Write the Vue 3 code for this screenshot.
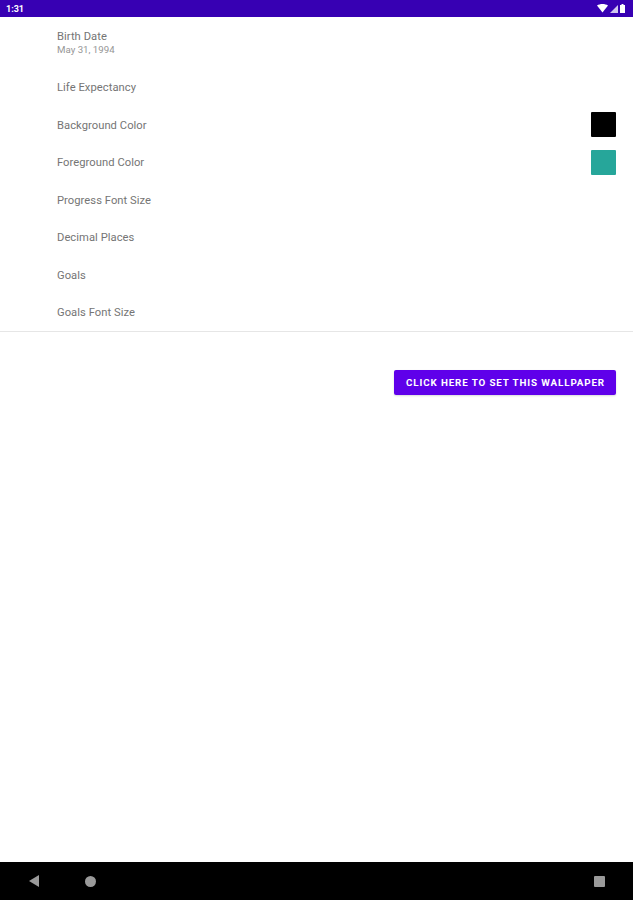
<template>
  <div class="screen">
    <div class="status-bar">
      <span class="clock">1:31</span>
      <div class="status-icons">
        <svg width="11" height="9" viewBox="0 0 11 9"><path d="M0 1.5 C3 -0.5 8 -0.5 11 1.5 L5.5 8.5 Z" fill="#fff" /></svg>
        <svg width="8" height="8" viewBox="0 0 8 8"><path d="M8 0 V8 H0 Z" fill="#cfc6ee" /></svg>
        <svg width="5" height="9" viewBox="0 0 5 9"><path d="M1.5 0 H3.5 V1 H5 V9 H0 V1 H1.5 Z" fill="#fff" /></svg>
      </div>
    </div>

    <div class="prefs">
      <div class="pref first">
        <div class="pref-text">
          <div class="pref-title">Birth Date</div>
          <div class="pref-summary">May 31, 1994</div>
        </div>
      </div>
      <div v-for="item in items" :key="item.title" class="pref">
        <div class="pref-title row-title">{{ item.title }}</div>
        <div v-if="item.color" class="swatch" :style="{ background: item.color }"></div>
      </div>
    </div>

    <div class="actions">
      <button class="set-btn">CLICK HERE TO SET THIS WALLPAPER</button>
    </div>

    <div class="nav-bar">
      <svg class="nav-back" width="12" height="14" viewBox="0 0 12 14"><path d="M11 1 V13 L1 7 Z" fill="#9a9a9a" /></svg>
      <div class="nav-home"></div>
      <div class="nav-recent"></div>
    </div>
  </div>
</template>

<script setup>
const items = [
  { title: "Life Expectancy" },
  { title: "Background Color", color: "#000000" },
  { title: "Foreground Color", color: "#26a69a" },
  { title: "Progress Font Size" },
  { title: "Decimal Places" },
  { title: "Goals" },
  { title: "Goals Font Size" },
];
</script>

<style>
body {
  margin: 0;
  background: #fff;
}
</style>

<style scoped>
.screen {
  width: 633px;
  height: 900px;
  display: flex;
  flex-direction: column;
  background: #fff;
  font-family: Roboto, "Liberation Sans", sans-serif;
  overflow: hidden;
}

.status-bar {
  height: 17px;
  flex: none;
  background: #3700b3;
  color: #fff;
  display: flex;
  align-items: center;
  justify-content: space-between;
  padding: 0 8px 0 6px;
  box-sizing: border-box;
}

.clock {
  font-size: 9px;
  font-weight: 700;
}

.status-icons {
  display: flex;
  align-items: center;
  gap: 2px;
}

.prefs {
  border-bottom: 1px solid #e6e6e6;
  flex: none;
}

.pref {
  height: 37.5px;
  display: flex;
  align-items: center;
  justify-content: space-between;
  padding: 0 17px 0 57px;
}

.pref.first {
  height: 51.5px;
}

.pref-title {
  font-size: 11.2px;
  letter-spacing: 0.05px;
  color: #757575;
}

.row-title {
  padding-top: 1px;
}

.pref-summary {
  font-size: 9.7px;
  color: #969696;
  margin-top: 1px;
}

.swatch {
  width: 25px;
  height: 25px;
  border-radius: 1px;
}

.actions {
  flex: 1;
  display: flex;
  justify-content: flex-end;
  align-items: flex-start;
  padding: 38px 17px 0 0;
}

.set-btn {
  width: 222px;
  height: 25px;
  border: none;
  border-radius: 2px;
  background: #5f00ea;
  color: #fff;
  font-family: inherit;
  font-size: 9.8px;
  font-weight: 700;
  letter-spacing: 0.88px;
  padding: 0 0 0 1px;
  white-space: nowrap;
  box-shadow: 0 1px 2px rgba(0, 0, 0, 0.15);
}

.nav-bar {
  height: 38px;
  flex: none;
  background: #000;
  position: relative;
  display: flex;
  align-items: center;
}

.nav-back {
  margin-left: 28px;
}

.nav-home {
  width: 11px;
  height: 11px;
  border-radius: 50%;
  background: #9a9a9a;
  margin-left: 45px;
}

.nav-recent {
  width: 11px;
  height: 11px;
  border-radius: 1px;
  background: #9a9a9a;
  margin-left: auto;
  margin-right: 28px;
}
</style>
